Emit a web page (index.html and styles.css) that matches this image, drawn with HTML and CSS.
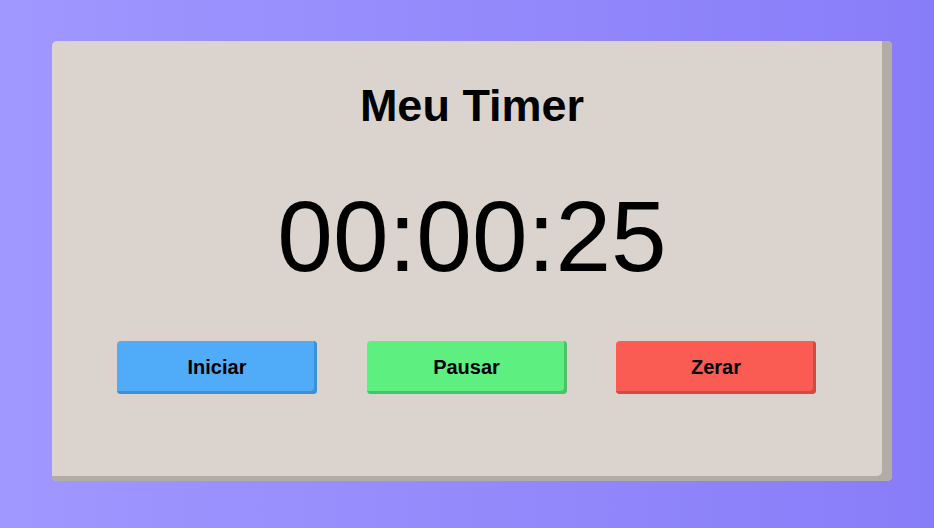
FILE: index.html
```html
<!DOCTYPE html>
<html lang="pt">
<head>
<meta charset="utf-8">
<title>Meu Timer</title>
<link rel="stylesheet" href="styles.css">
</head>
<body>
  <main class="card">
    <h1 class="title">Meu Timer</h1>
    <div class="time">00:00:25</div>
    <div class="actions">
      <button class="btn btn-start">Iniciar</button>
      <button class="btn btn-pause">Pausar</button>
      <button class="btn btn-reset">Zerar</button>
    </div>
  </main>
</body>
</html>
```

FILE: styles.css
```css
html, body {
  margin: 0;
  padding: 0;
  height: 100%;
}

body {
  background: linear-gradient(to right, #a097ff, #887df8);
  font-family: "Liberation Sans", Arial, sans-serif;
  padding-top: 41px;
  box-sizing: border-box;
}

.card {
  box-sizing: border-box;
  width: 840px;
  height: 440px;
  margin-left: 52px;
  padding-top: 40px;
  background: #dbd4ce;
  border-radius: 5px;
  box-shadow: inset -10px -5px 0 #b2aca7;
  text-align: center;
}

.title {
  margin: 0;
  font-size: 45px;
  line-height: 50px;
  font-weight: bold;
  color: #000;
}

.time {
  margin-top: 48px;
  font-size: 100px;
  line-height: 115px;
  color: #000;
}

.actions {
  margin-top: 47px;
  display: flex;
  justify-content: space-between;
  padding: 0 76px 0 65px;
}

.btn {
  width: 200px;
  height: 53px;
  padding: 0;
  border: none;
  border-radius: 4px;
  font-family: "Liberation Sans", Arial, sans-serif;
  font-size: 20px;
  font-weight: bold;
  color: #000;
  cursor: pointer;
}

.btn-start {
  background: #50acf8;
  box-shadow: inset -3px -3px 0 #3f8fd3;
}

.btn-pause {
  background: #5def80;
  box-shadow: inset -3px -3px 0 #48c368;
}

.btn-reset {
  background: #fa5b53;
  box-shadow: inset -3px -3px 0 #d34a43;
}
```
